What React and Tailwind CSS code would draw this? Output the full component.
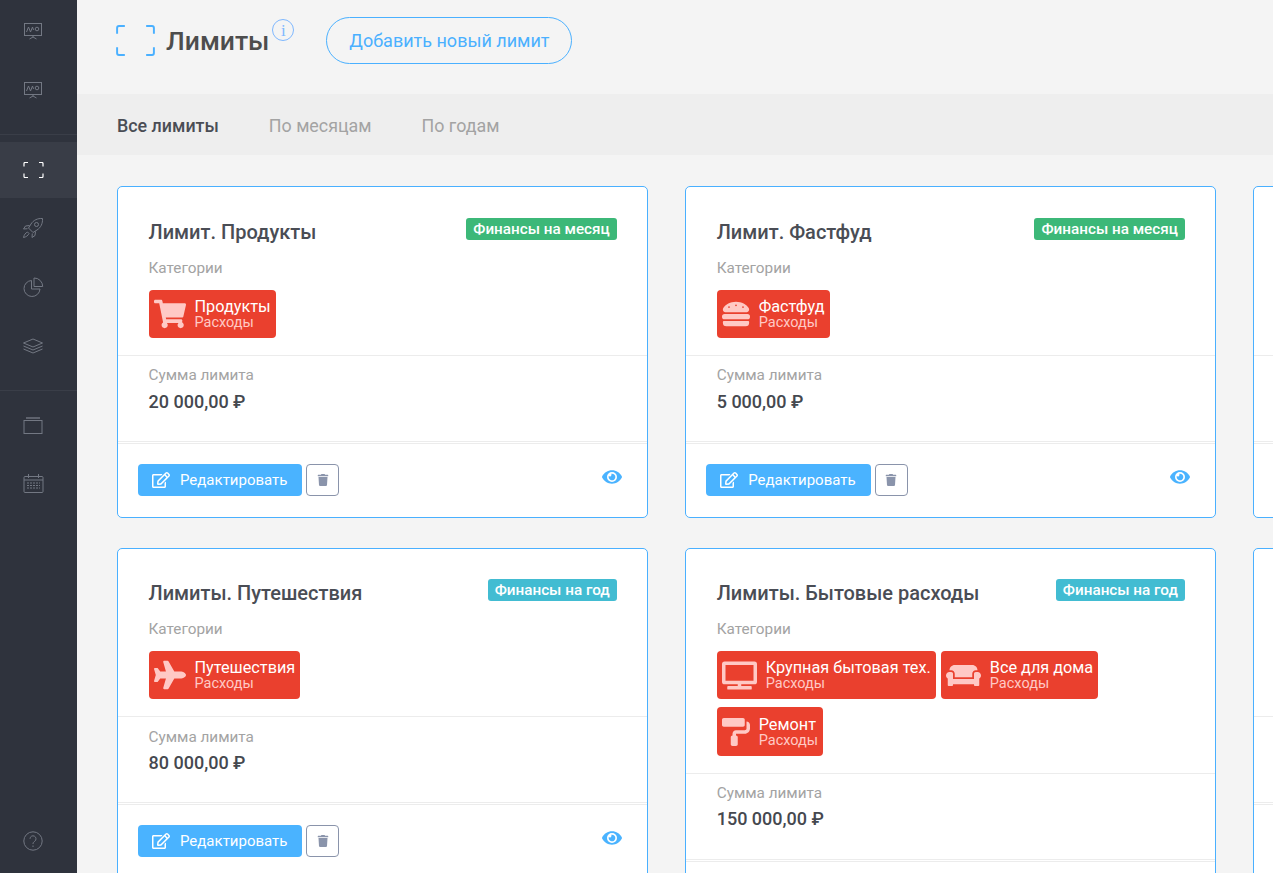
import React from "react";
import { FaShoppingCart, FaHamburger, FaPlane, FaTv, FaCouch, FaPaintRoller, FaRegEdit, FaTrash, FaEye } from "react-icons/fa";

const S = ({ children, w = 24, h = 24, vb = "0 0 24 24", className = "text-[#737883]", sw = 1 }) => (
  <svg width={w} height={h} viewBox={vb} fill="none" stroke="currentColor" strokeWidth={sw} className={className}>{children}</svg>
);

const Board = () => (
  <S w={20} h={18} vb="0 0 20 18">
    <rect x="1.5" y="1.5" width="17" height="12" />
    <path d="M3.5 10l2-5 2 5 2-5 1 3" />
    <circle cx="14" cy="7" r="1.8" />
    <path d="M10 13.5v1.5M6.5 17l3.5-2 3.5 2" />
  </S>
);
const Brackets = ({ size, className, sw, vb = "0 0 40 32" }) => (
  <svg width={size[0]} height={size[1]} viewBox={vb} fill="none" stroke="currentColor" strokeWidth={sw} className={className}>
    <path d="M1 9V3a2 2 0 0 1 2-2h6M31 1h6a2 2 0 0 1 2 2v6M39 23v6a2 2 0 0 1-2 2h-6M9 31H3a2 2 0 0 1-2-2v-6" />
  </svg>
);
const Rocket = () => (
  <S w={22} h={22} vb="0 0 22 22">
    <path d="M20.5 1.5c-5-.3-9 1.6-11.5 5.5L6.5 11l4.5 4.500 4-2.500c3.900-2.500 5.800-6.500 5.500-11.500z" />
    <circle cx="14.500" cy="7.500" r="2" />
    <path d="M7.500 8.500l-4 .5L1.500 12l4-.3M13.500 14.500l-.5 4-3 2 .3-4" />
    <path d="M5.500 15c-2 .8-3.500 3-4 5.500 2.500-.5 4.700-2 5.500-4z" />
  </S>
);
const Pie = () => (
  <S w={21} h={21} vb="0 0 21 21">
    <path d="M8.500 3.500a8 8 0 1 0 8.500 8.500H8.500z" />
    <path d="M11 1a8.500 8.500 0 0 1 8.700 8.500H11z" />
  </S>
);
const Layers = () => (
  <S w={22} h={16} vb="0 0 22 16">
    <path d="M11 1l9.500 4L11 9 1.500 5z" />
    <path d="M1.500 8L11 12l9.500-4" />
    <path d="M1.500 11L11 15l9.500-4" />
  </S>
);
const Tray = () => (
  <S w={20} h={17} vb="0 0 20 17">
    <rect x="1" y="3.500" width="18" height="13" />
    <path d="M3 1h14" strokeWidth="1.400" />
  </S>
);
const Calendar = () => (
  <S w={21} h={19} vb="0 0 21 19">
    <rect x="1" y="2.500" width="19" height="16" rx="1" />
    <path d="M1 6h19M5.500 0v4M15.500 0v4" />
    <path d="M4 9h13M4 11.500h13M4 14h13" strokeDasharray="2 1" />
  </S>
);
const Help = () => (
  <S w={20} h={20} vb="0 0 20 20">
    <circle cx="10" cy="10" r="9.200" />
    <path d="M7 7.800a3 3 0 1 1 4.700 2.500c-1 .7-1.700 1.200-1.700 2.700M10 14.500v1.500" />
  </S>
);

const Item = ({ children, h = "h-[58.600px]", active }) => (
  <div className={`flex items-center justify-center pr-[11px] ${h} ${active ? "bg-[#393d47]" : ""}`}>{children}</div>
);

const Sidebar = () => (
  <aside className="w-[77px] shrink-0 h-full bg-[#2f333d] flex flex-col">
    <div className="h-[135px] pt-[2px] border-b border-[#3a3e48]">
      <Item><Board /></Item>
      <Item><Board /></Item>
    </div>
    <div className="h-[256px] pt-[7px] border-b border-[#3a3e48]">
      <Item h="h-[56px]" active><Brackets size={[21, 16]} sw={2.400} className="text-white" /></Item>
      <Item h="h-[60px]"><Rocket /></Item>
      <Item h="h-[59px]"><Pie /></Item>
      <Item h="h-[58px]"><Layers /></Item>
    </div>
    <div className="pt-[5px]">
      <Item><Tray /></Item>
      <Item><Calendar /></Item>
    </div>
    <div className="mt-auto h-[42px] pr-[11px] flex justify-center"><Help /></div>
  </aside>
);

const Chip = ({ Icon, iconSize, iconW, title }) => (
  <div className="h-[48.300px] rounded-[4px] bg-[#ea402e] flex items-center px-[5px]">
    <div className="flex items-center justify-center shrink-0 text-[#ffc9c5] mr-[9px]" style={{ width: iconW }}>
      <Icon size={iconSize} />
    </div>
    <div className="flex flex-col">
      <span className="text-[16.250px] leading-[17px] text-white whitespace-nowrap">{title}</span>
      <span className="text-[14.500px] leading-[15px] text-[#ffc9c5] whitespace-nowrap">Расходы</span>
    </div>
  </div>
);

const Card = ({ title, badge, badgeColor, chips, sum }) => (
  <div className="min-h-[331.200px] bg-white border border-[#4ab0ff] rounded-[5px] flex flex-col overflow-hidden">
    <div className="px-[30.500px] pt-[30.500px] pb-[16.900px] border-b border-[#ececec]">
      <div className="flex justify-between items-start h-[28px]">
        <span className="text-[20px] leading-[28px] font-medium text-[#4a4d55]">{title}</span>
        {badge && <span className={`h-[22px] mt-[.4px] rounded-[3px] px-[7px] text-[15.250px] leading-[22px] font-medium text-white ${badgeColor}`}>{badge}</span>}
      </div>
      <div className="mt-[14px] text-[15.300px] leading-[16px] text-[#a3a3a3] min-h-[16px]">{chips && "Категории"}</div>
      <div className="mt-[14px] flex flex-wrap gap-x-[5px] gap-y-2 min-h-[48.300px]">
        {chips}
      </div>
    </div>
    <div className="h-[86px] shrink-0 px-[30.500px] pt-[11.400px] border-b border-[#ececec]">
      <div className="text-[15.300px] leading-[16px] text-[#a3a3a3] min-h-[16px]">{sum && "Сумма лимита"}</div>
      <div className="mt-[6.500px] text-[18px] leading-[24px] font-medium text-[#45484f]">{sum}</div>
    </div>
    <div className="mt-px border-t border-[#ececec] pl-[20px] pr-[25px] pt-[20px] pb-[20.500px] flex items-start min-h-[73px]">
      {sum && (
        <>
          <button className="h-8 w-[164.400px] rounded-[4px] bg-[#4ab3ff] text-white text-[15px] flex items-center pl-[14px]">
            <FaRegEdit size={18} className="mr-[10px]" />Редактировать
          </button>
          <button className="h-8 w-[33px] ml-[4px] rounded-[4px] border border-[#8a94ab] text-[#8a94ab] flex items-center justify-center">
            <FaTrash size={12} />
          </button>
          <FaEye size={20} className="ml-auto mt-[3px] text-[#4ab3ff]" />
        </>
      )}
    </div>
  </div>
);

const GREEN = "bg-[#3cb878]";
const TEAL = "bg-[#42bcd2]";

export default function App() {
  return (
    <div className="h-screen w-full overflow-hidden flex bg-[#f4f4f4] font-['Roboto',sans-serif]">
      <Sidebar />
      <main className="flex-1 min-w-0 h-full overflow-hidden flex flex-col">
        <header className="h-[94px] shrink-0 flex items-start pl-[39px] pt-[17px]">
          <Brackets size={[39, 31]} sw={2} className="text-[#4ab0ff] mt-[8px] mr-[1px]" />
          <h1 className="ml-[10px] mt-[5px] text-[26.500px] leading-[38px] font-medium text-[#4d4d4d]">Лимиты</h1>
          <span className="ml-[3px] mt-[2px] w-[22px] h-[22px] rounded-full border border-[#7fb8ff] text-[#7fb8ff] flex items-center justify-center text-[17px] leading-none font-['Liberation_Serif',serif]">i</span>
          <button className="ml-[32px] h-[47px] w-[246px] rounded-full border border-[#4ab0ff] text-[#4ab0ff] text-[18px]">Добавить новый лимит</button>
        </header>
        <nav className="h-[61.400px] shrink-0 bg-[#eeeeee] flex items-center pl-[40px] pt-[3px] gap-[50px] text-[17.850px]">
          <span className="font-medium text-[#4a4d55]">Все лимиты</span>
          <span className="text-[#a3a3a3]">По месяцам</span>
          <span className="text-[#a3a3a3]">По годам</span>
        </nav>
        <section className="pt-[31px] pl-[40px] grid grid-cols-[531.200px_531.200px_531.200px] gap-x-[37px] gap-y-[30px]">
          <Card title="Лимит. Продукты" badge="Финансы на месяц" badgeColor={GREEN} sum="20 000,00 ₽"
            chips={<Chip Icon={FaShoppingCart} iconSize={32} iconW={32} title="Продукты" />} />
          <Card title="Лимит. Фастфуд" badge="Финансы на месяц" badgeColor={GREEN} sum="5 000,00 ₽"
            chips={<Chip Icon={FaHamburger} iconSize={28} iconW={28} title="Фастфуд" />} />
          <Card />
          <Card title="Лимиты. Путешествия" badge="Финансы на год" badgeColor={TEAL} sum="80 000,00 ₽"
            chips={<Chip Icon={FaPlane} iconSize={32} iconW={32} title="Путешествия" />} />
          <Card title="Лимиты. Бытовые расходы" badge="Финансы на год" badgeColor={TEAL} sum="150 000,00 ₽"
            chips={<>
              <Chip Icon={FaTv} iconSize={35} iconW={35} title="Крупная бытовая тех." />
              <Chip Icon={FaCouch} iconSize={35} iconW={35} title="Все для дома" />
              <Chip Icon={FaPaintRoller} iconSize={28} iconW={28} title="Ремонт" />
            </>} />
          <Card />
        </section>
      </main>
    </div>
  );
}
